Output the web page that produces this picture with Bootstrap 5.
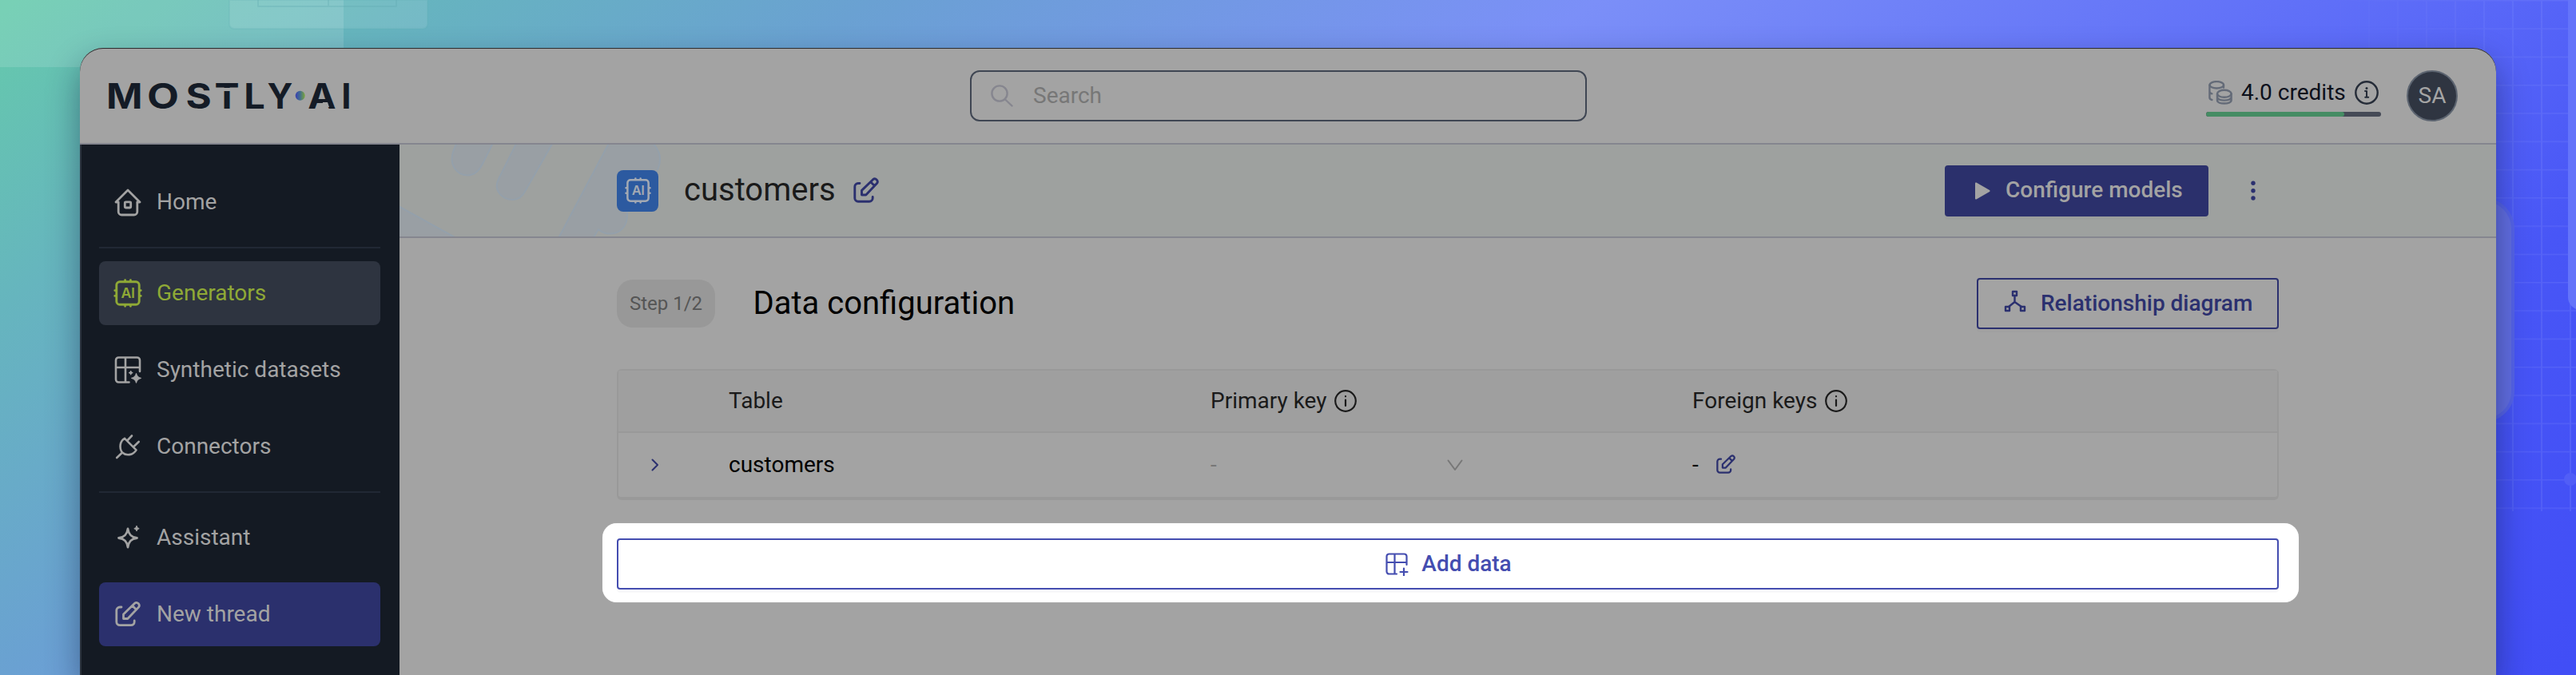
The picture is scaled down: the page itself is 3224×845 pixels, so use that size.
<!DOCTYPE html>
<html lang="en">
<head>
<meta charset="utf-8">
<title>MOSTLY AI - Data configuration</title>
<link href="https://cdn.jsdelivr.net/npm/bootstrap@5.3.0/dist/css/bootstrap.min.css" rel="stylesheet">
<style>
  body{font-family:Roboto,"Liberation Sans",sans-serif;font-size:28px;line-height:1.17;color:#000;height:845px;overflow:hidden;position:relative;
    background:linear-gradient(142deg,#65caab 0,#66b5be 305px,#6aa1d2 670px,#7b8ff8 1230px,#5a69f8 1900px,#4856f6 2200px,#414ef6 2635px)}
  svg{display:block;flex:none;fill:none;stroke:currentColor;stroke-linecap:round;stroke-linejoin:round}
  .backdrop{position:absolute;inset:0;width:3224px;height:845px;stroke:none}
  .app-window{position:relative;margin:60px 100px 0;height:785px;background:#a3a3a3;border-radius:29px 29px 0 0;overflow:hidden;box-shadow:inset 0 1px 0 #2c2c2e}
  .window-shadow{position:absolute;left:100px;right:100px;top:60px;bottom:0;border-radius:29px 29px 0 0;box-shadow:0 18px 40px rgba(10,20,50,.42)}
  .topbar{height:121px;border-bottom:2px solid #85868f;padding:28px 48px 0 32px}
  .search-box{width:772px;height:64px;border:2px solid #3f4653;border-radius:12px;margin-left:762px;padding-left:24px;color:#777;gap:25px}
  .icon-search{color:#86868f}
  .credits{width:219px;margin:13px 32px 0 0;color:#0c101b}
  .icon-coins{color:#646b78}
  .icon-info{color:#252c38}
  .credit-bar{height:6px;border-radius:3px;background:#454a56;margin-top:9px}
  .credit-bar .progress-bar{background:#458c63;border-radius:3px}
  .avatar{width:64px;height:64px;background:#2f3541;border:2px solid #5c6470;color:#a5a5a5}
  .side{width:400px;height:664px;background:#141a23;border-left:2px solid #2b333e;padding:32px 24px 0 22px;gap:16px}
  .side a{height:80px;border-radius:8px;padding:0 16px;gap:16px;color:#a3a3a3;text-decoration:none;display:flex;align-items:center;flex:none}
  .side .current{background:#2e3440;color:#8fa936}
  .side .thread{background:#2b306d}
  .rule{height:2px;background:#212834;flex:none}
  .titlebar{height:117px;background:#9ea19f;border-bottom:2px solid #85868f;padding:0 272px;position:relative}
  .pattern{position:absolute;left:0;top:0;fill:#999fa4;stroke:#94a0ab;stroke-width:2}
  .tile{width:52px;height:52px;border-radius:8px;background:#2c5aa0;color:#a3a9b3}
  .page-title{font-size:40px;color:#1a1a1a}
  .ink{color:#2b306f}
  .cta{height:64px;border-radius:4px;font-weight:500;border:2px solid #2b306f;box-shadow:0 4px 0 rgba(0,0,0,.016);font-size:28px;padding:0;display:flex;align-items:center}
  .cta-solid{width:330px;background:#2b306c;color:#a3a3a3;border-color:#2b306c;padding-left:36px;gap:19px}
  .content{padding:50px 272px 0}
  .step{width:123px;height:60px;border-radius:20px;background:#989898;color:#555;font-size:24px}
  .grid-card{margin-top:50px;height:164px;border:2px solid #999;border-bottom-width:4px;border-radius:6px}
  .grid-row{display:grid;grid-template-columns:138px 603px 603px 1fr;align-items:center}
  .grid-head{height:78px;background:#9f9f9f;color:#1a1a1a;border-bottom:2px solid #999}
  .grid-body{height:80px}
  .spot{margin:29px -25px 0 -18px;height:99px;border-radius:18px;background:#fff;padding:19px 25px 0 18px;box-shadow:0 0 1px #ddd}
  .spot .cta{border-color:#444db0;color:#444db0;gap:16px;padding-left:2px;box-shadow:0 4px 0 #fafafa}
</style>
</head>
<body>
<svg class="backdrop" viewBox="0 0 3224 845">
  <defs><linearGradient id="fadeIn" x1="0" x2="1"><stop offset="0" stop-color="#fff" stop-opacity="0"/><stop offset="1" stop-color="#fff"/></linearGradient>
  <pattern id="mesh" x="3144" y="0" width="36" height="35.3" patternUnits="userSpaceOnUse"><path d="M0 .5H36M1 0V35.3" stroke="#8f9cff" stroke-opacity=".22" stroke-width="2"/></pattern>
  <mask id="meshMask"><rect x="2900" y="0" width="324" height="640" fill="url(#fadeIn)"/></mask></defs>
  <path d="M0 0H430V84H0z" fill="#fff" fill-opacity=".13"/>
  <path d="M287 0H535V30a6 6 0 0 1-6 6H293a6 6 0 0 1-6-6z" fill="#fff" fill-opacity=".1" stroke="#5fb0b2" stroke-opacity=".2" stroke-width="2"/>
  <path d="M323 0V8H496V0M411 0V8" stroke="#5fa8ae" stroke-opacity=".3" stroke-width="2"/>
  <rect x="2900" y="0" width="324" height="640" fill="url(#mesh)" mask="url(#meshMask)"/>
  <rect x="3040" y="250" width="105" height="276" rx="36" fill="#626ee2" stroke="#5563e8" stroke-width="4"/>
  <rect x="3214" y="-30" width="60" height="418" rx="16" fill="#6474fa"/>
  <circle cx="3217" cy="600" r="8" fill="#515ef7"/>
</svg>
<div class="window-shadow"></div>
<div class="app-window">
  <header class="topbar d-flex align-items-start">
    <svg width="320" height="64" viewBox="132 88 320 64" aria-label="MOSTLY AI" style="stroke:none">
      <defs><linearGradient id="dotFill"><stop offset="0" stop-color="#3a3fb0"/><stop offset=".45" stop-color="#3f6a94"/><stop offset="1" stop-color="#7aa63a"/></linearGradient></defs>
      <g fill="#141b26" font-family="Inter,sans-serif" font-weight="700" font-size="43.6">
        <text y="135.7" x="133" textLength="45.500" lengthAdjust="spacingAndGlyphs">M</text>
        <text y="135.7" x="184" textLength="40" lengthAdjust="spacingAndGlyphs">O</text>
        <text y="135.7" x="232.400" textLength="32.200" lengthAdjust="spacingAndGlyphs">S</text>
        <text y="135.7" x="268.600" textLength="31" lengthAdjust="spacingAndGlyphs">T</text>
        <text y="135.7" x="305.300" textLength="26.500" lengthAdjust="spacingAndGlyphs">L</text>
        <text y="135.7" x="334.500">Y</text>
        <text y="135.7" x="385.300" textLength="35.300" lengthAdjust="spacingAndGlyphs">A</text>
        <text y="135.7" x="427.200">I</text>
      </g>
      <path d="M266 110H302V114H266zM410 128h-6v6h8z" fill="#a3a3a3"/>
      <circle cx="375.7" cy="119.7" r="6" fill="url(#dotFill)"/>
    </svg>
    <div class="search-box d-flex align-items-center">
      <svg class="icon-search" width="28" height="28" viewBox="0 0 28 28" stroke-width="2.4"><circle cx="11" cy="11" r="9.6"/><path d="M18 18.5l8.5 8"/></svg>
      <span>Search</span>
    </div>
    <div class="credits ms-auto">
      <div class="d-flex align-items-center" style="height:30px">
        <svg class="icon-coins" width="30" height="30" viewBox="0 0 30 30" stroke-width="2.4" style="margin-left:3px"><ellipse cx="10.3" cy="5.3" rx="8.8" ry="4.2"/><path d="M1.4 5.5V21c0 1.800 1.300 2.600 3 3M1.400 13.500c0 1.500 1.200 2.400 3 2.800M19 5.500v3"/><ellipse cx="19.800" cy="16.300" rx="8.800" ry="4.500"/><path d="M11 16.500v8c0 5.400 17.600 5.400 17.600 0v-8M11 21c2 4.800 15.600 4.800 17.600 0"/></svg>
        <span style="margin-left:11px">4.0 credits</span>
        <svg class="icon-info ms-auto" width="30" height="30" viewBox="0 0 30 30" stroke-width="2.4" style="margin-right:3px"><circle cx="15" cy="15" r="13.700"/><path d="M13 13h2v7.500M13.200 20.700h4" stroke-width="2"/><circle cx="15" cy="9.500" r=".8" fill="currentColor" stroke-width="1.500"/></svg>
      </div>
      <div class="progress credit-bar"><div class="progress-bar" style="width:79%"></div></div>
    </div>
    <div class="avatar rounded-circle d-flex align-items-center justify-content-center">SA</div>
  </header>
  <div class="d-flex">
    <nav class="side d-flex flex-column flex-shrink-0">
      <a href="#"><svg width="40" height="40" viewBox="0 0 40 40" stroke-width="2.800"><path d="M8.200 20H5L20 5 35 20h-3.200M8.200 20v12a4 4 0 0 0 4 4h15.600a4 4 0 0 0 4-4V20"/><rect x="16.300" y="19.800" width="7.400" height="7.200" rx="1"/></svg>Home</a>
      <div class="rule"></div>
      <a href="#" class="current"><svg width="40" height="40" viewBox="0 0 40 40" stroke-width="2.900"><use href="#chip"/></svg>Generators</a>
      <a href="#"><svg width="40" height="40" viewBox="0 0 40 40" stroke-width="2.600"><path d="M35 22V8a3.500 3.500 0 0 0-3.500-3.500h-23A3.500 3.500 0 0 0 5 8v24a3.500 3.500 0 0 0 3.500 3.500H21.500M5 17H35M17 4.500V35.500"/><path d="M30.500 24.500q1 4.800 5.800 5.800q-4.800 1-5.800 5.800q-1-4.800-5.800-5.800q4.800-1 5.800-5.800zM23.700 21.500q.4 1.800 2.200 2.200q-1.800.4-2.200 2.200q-.4-1.800-2.200-2.200q1.800-.4 2.200-2.200z" fill="currentColor" stroke-width="1.200"/></svg>Synthetic datasets</a>
      <a href="#"><svg width="40" height="40" viewBox="0 0 40 40" stroke-width="2.600"><path d="M16 9.800L30.500 24.300M19.800 12L25 6.500M27.500 20L33.700 14M16 9.800C10 13 8.800 22 13 27.500C18 32 26.500 31 30.500 24.300M12.500 28L6.200 34"/></svg>Connectors</a>
      <div class="rule"></div>
      <a href="#"><svg width="40" height="40" viewBox="0 0 40 40" stroke-width="2.800"><path d="M20 9C21 16 24 19.500 31.500 20.500C24 21.500 21 25 20 32C19 25 16 21.500 8.500 20.500C16 19.500 19 16 20 9z"/><path d="M31 5.500q.5 2.700 3.200 3.200q-2.700.5-3.200 3.200q-.5-2.700-3.200-3.200q2.700-.5 3.200-3.200z" fill="currentColor" stroke-width="1"/></svg>Assistant</a>
      <a href="#" class="thread"><svg width="40" height="40" viewBox="-4 -3.500 40 40" stroke-width="2.800"><use href="#edit"/></svg>New thread</a>
    </nav>
    <main class="flex-grow-1">
      <div class="titlebar d-flex align-items-center">
        <svg class="pattern" width="400" height="115" viewBox="500 181 400 115">
          <path d="M575 170L567 190C562 206 571 219 585 219.500C594 219.500 600 213 604 205L624 165zM650 172L624 224C617 238 628 250 642 250C650 250 655 244 658 238L698 168zM767 170L699.500 297H743L749 287C758 297 785 295 785 269V262L818 222C828 206 830 192 816 178zM495 256L571 298H495z"/></svg>
        <div class="tile position-relative d-flex align-items-center justify-content-center">
          <svg width="37" height="37" viewBox="0 0 40 40" stroke-width="2.700">
            <g id="chip"><rect x="5.800" y="5.800" width="28.400" height="28.400" rx="4"/><path d="M16.600 5V3.800M23.400 5V3.800M16.600 35v1.200M23.400 35v1.200M5 16.600H3.800M5 23.400H3.800M35 16.600h1.200M35 23.400h1.200"/><text x="11.600" y="26.400" font-family="Inter,sans-serif" font-weight="600" font-size="17.800" fill="currentColor" stroke="none" textLength="17.300">AI</text></g>
          </svg>
        </div>
        <span class="page-title position-relative" style="margin-left:32px">customers</span>
        <svg class="ink" width="32" height="32" viewBox="0 0 32 32" stroke-width="2.900" style="margin:-2px 0 0 22px"><g id="edit"><path d="M8 7.500H6a4.200 4.200 0 0 0-4.200 4.200V26A4.200 4.200 0 0 0 6 30.200H20a4.200 4.200 0 0 0 4.200-4.200v-1.500"/><path d="M10.500 22v-5.600L24.600 2.700a3.500 3.500 0 0 1 4.900 4.900L15.800 22zM21.700 5.800l4.700 4.700"/></g></svg>
        <button class="cta cta-solid ms-auto"><svg width="19" height="22" viewBox="0 0 19 22" style="fill:currentColor;stroke:none"><path d="M0 1.500Q0 0 1.500.6L18 10q1.200 1 0 2L1.500 21.400Q0 22 0 20.500z"/></svg>Configure models</button>
        <svg class="ink" width="6" height="26" viewBox="0 0 6 26" style="margin:0 29px 0 53px;fill:currentColor;stroke:none"><circle cx="3" cy="3.200" r="2.700"/><circle cx="3" cy="12.700" r="2.700"/><circle cx="3" cy="22" r="2.700"/></svg>
      </div>
      <div class="content">
        <div class="d-flex align-items-center" style="height:64px">
          <span class="step d-flex align-items-center justify-content-center">Step 1/2</span>
          <span style="font-size:40px;margin-left:47.500px">Data configuration</span>
          <button class="cta ink bg-transparent ms-auto" style="width:378px;padding-left:32px;gap:18px"><svg width="28" height="28" viewBox="0 0 28 28" stroke-width="2.400" style="margin-top:-6px"><rect x="11" y="2" width="5" height="5"/><rect x="2" y="21" width="5" height="5"/><rect x="21" y="21" width="5" height="5"/><path d="M13.500 7V15L6 21M13.500 15L22 21"/></svg>Relationship diagram</button>
        </div>
        <div class="grid-card">
          <div class="grid-row grid-head">
            <span></span><span>Table</span>
            <span class="d-flex align-items-center">Primary key<svg width="28" height="28" viewBox="0 0 28 28" stroke-width="2.200" style="margin-left:9px"><g id="info"><circle cx="14" cy="14" r="12.800"/><path d="M14 12.500V20M14 8v.3"/></g></svg></span>
            <span class="d-flex align-items-center">Foreign keys<svg width="28" height="28" viewBox="0 0 28 28" stroke-width="2.200" style="margin-left:10px"><use href="#info"/></svg></span>
          </div>
          <div class="grid-row grid-body">
            <svg class="ink" width="12" height="16" viewBox="0 0 12 16" stroke-width="2" style="margin-left:40px"><path d="M2.500 1.500L9 8L2.500 14.500"/></svg>
            <span>customers</span>
            <span class="d-flex align-items-center" style="color:#777">-<svg width="20" height="15" viewBox="0 0 20 15" stroke-width="2" style="margin-left:288px"><path d="M1.500 1.500L10 13L18.500 1.500"/></svg></span>
            <span class="d-flex align-items-center">-<svg class="ink" width="24" height="24" viewBox="0 0 32 32" stroke-width="3" style="margin:-3px 0 0 22px"><use href="#edit"/></svg></span>
          </div>
        </div>
        <div class="spot">
          <button class="cta bg-white w-100 justify-content-center"><svg width="29" height="29" viewBox="0 0 29 29" stroke-width="2.200"><path d="M26.500 15V4.500a3 3 0 0 0-3-3h-19a3 3 0 0 0-3 3v19a3 3 0 0 0 3 3h9.500M1.500 12h25M11.500 1.500v25M23 19.500v9M18.500 24h9"/></svg>Add data</button>
        </div>
      </div>
    </main>
  </div>
</div>
<script src="https://cdn.jsdelivr.net/npm/bootstrap@5.3.0/dist/js/bootstrap.bundle.min.js"></script>
</body>
</html>
